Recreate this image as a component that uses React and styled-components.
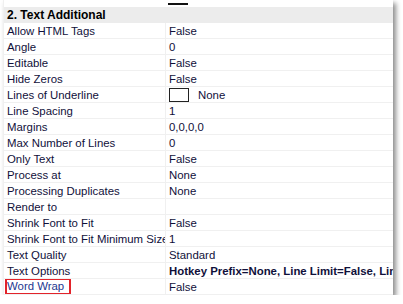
import React from 'react';
import styled, { createGlobalStyle } from 'styled-components';

const GlobalStyle = createGlobalStyle`
  html, body {
    margin: 0;
    padding: 0;
    background: #ffffff;
  }
  body {
    font-family: "Liberation Sans", Arial, sans-serif;
    font-size: 11.4px;
  }
`;

const Panel = styled.div`
  margin-left: 3px;
  width: 389px;
  background: #ffffff;
  border-left: 1px solid #f0f0f0;
  box-shadow: 3px 3px 5px rgba(0, 0, 0, 0.45);
`;

const TopStrip = styled.div`
  display: grid;
  grid-template-columns: 161px 1fr;
  height: 7px;
`;

const SwatchEdge = styled.div`
  width: 20px;
  height: 2px;
  margin: 3px 0 0 3px;
  background: #111111;
`;

const Category = styled.div`
  height: 16px;
  background: #ececec;
  display: flex;
  align-items: center;
  padding-left: 3px;
  font-size: 12px;
  font-weight: bold;
  color: #000000;
`;

const Row = styled.div`
  display: grid;
  grid-template-columns: 161px 1fr;
  height: 16px;
  box-sizing: border-box;
  border-bottom: 1px solid #f0f0f0;
`;

const Cell = styled.div`
  display: flex;
  align-items: center;
  overflow: hidden;
  white-space: nowrap;
  color: ${(p) => (p.$accent ? '#1d3790' : '#10103a')};
  font-weight: ${(p) => (p.$bold ? 'bold' : 'normal')};
`;

const Label = styled(Cell)`
  padding-left: 3px;
`;

const Value = styled(Cell)`
  padding-left: 3px;
  border-left: 1px solid #f0f0f0;
`;

const Swatch = styled.span`
  display: inline-block;
  flex: none;
  width: 18px;
  height: 12px;
  border: 1px solid #222222;
  background: #ffffff;
  margin-right: 9px;
`;

const Highlight = styled.span`
  display: inline-block;
  line-height: 13px;
  padding-right: 5px;
  margin-top: -1px;
  outline: 2px solid #e2232a;
`;

const rows = [
  ['Allow HTML Tags', 'False'],
  ['Angle', '0'],
  ['Editable', 'False'],
  ['Hide Zeros', 'False'],
  ['Lines of Underline', 'None', 'swatch'],
  ['Line Spacing', '1'],
  ['Margins', '0,0,0,0'],
  ['Max Number of Lines', '0'],
  ['Only Text', 'False'],
  ['Process at', 'None'],
  ['Processing Duplicates', 'None'],
  ['Render to', ''],
  ['Shrink Font to Fit', 'False'],
  ['Shrink Font to Fit Minimum Size', '1'],
  ['Text Quality', 'Standard'],
  ['Text Options', 'Hotkey Prefix=None, Line Limit=False, Line Trimming', 'bold'],
  ['Word Wrap', 'False', 'mark'],
];

export default function App() {
  return (
    <>
      <GlobalStyle />
      <Panel>
        <TopStrip>
          <div />
          <SwatchEdge />
        </TopStrip>
        <Category>2. Text Additional</Category>
        {rows.map(([name, value, kind]) => (
          <Row key={name}>
            <Label $accent={kind === 'mark'}>
              {kind === 'mark' ? <Highlight>{name}</Highlight> : name}
            </Label>
            <Value $bold={kind === 'bold'}>
              {kind === 'swatch' && <Swatch />}
              {value}
            </Value>
          </Row>
        ))}
      </Panel>
    </>
  );
}
